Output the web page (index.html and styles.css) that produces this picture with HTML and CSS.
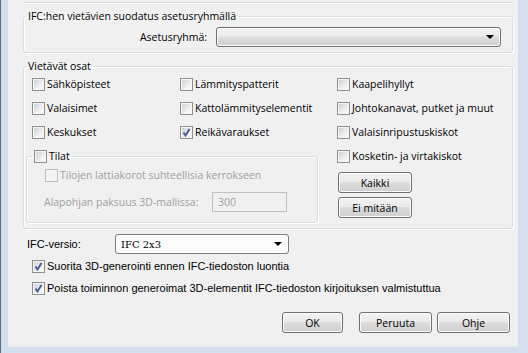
FILE: index.html
```html
<!DOCTYPE html>
<html lang="fi">
<head>
    <meta charset="UTF-8">
    <title>IFC-vienti</title>
    <link rel="stylesheet" href="styles.css">
</head>
<body>
    <div class="window">
        <div class="dialog">
            <div class="prev-group"></div>

            <fieldset class="group group-filter">
                <legend>IFC:hen vietävien suodatus asetusryhmällä</legend>
                <div class="field-row">
                    <span class="field-label">Asetusryhmä:</span>
                    <div class="combo combo-set">
                        <span class="combo-text"></span>
                        <span class="arrow"></span>
                    </div>
                </div>
            </fieldset>

            <fieldset class="group group-parts">
                <legend>Vietävät osat</legend>
                <div class="parts">
                    <div class="parts-left">
                        <div class="check-grid">
                            <label class="check"><span class="box"></span>Sähköpisteet</label>
                            <label class="check"><span class="box"></span>Lämmityspatterit</label>
                            <label class="check"><span class="box"></span>Valaisimet</label>
                            <label class="check"><span class="box"></span>Kattolämmityselementit</label>
                            <label class="check"><span class="box"></span>Keskukset</label>
                            <label class="check"><span class="box checked"></span>Reikävaraukset</label>
                        </div>
                        <fieldset class="subgroup">
                            <legend><label class="check"><span class="box"></span>Tilat</label></legend>
                            <label class="check disabled sub-check"><span class="box"></span>Tilojen lattiakorot suhteellisia kerrokseen</label>
                            <div class="thickness-row disabled">
                                <span class="thickness-label">Alapohjan paksuus 3D-mallissa:</span>
                                <span class="textbox">300</span>
                            </div>
                        </fieldset>
                    </div>
                    <div class="parts-right">
                        <label class="check"><span class="box"></span>Kaapelihyllyt</label>
                        <label class="check"><span class="box"></span>Johtokanavat, putket ja muut</label>
                        <label class="check"><span class="box"></span>Valaisinripustuskiskot</label>
                        <label class="check"><span class="box"></span>Kosketin- ja virtakiskot</label>
                        <button class="btn btn-small btn-first">Kaikki</button>
                        <button class="btn btn-small">Ei mitään</button>
                    </div>
                </div>
            </fieldset>

            <div class="version-row">
                <span class="version-label">IFC-versio:</span>
                <div class="combo combo-version">
                    <span class="combo-text">IFC 2x3</span>
                    <span class="arrow"></span>
                </div>
            </div>
            <label class="check check-old"><span class="box checked"></span>Suorita 3D-generointi ennen IFC-tiedoston luontia</label>
            <label class="check check-old"><span class="box checked"></span>Poista toiminnon generoimat 3D-elementit IFC-tiedoston kirjoituksen valmistuttua</label>

            <div class="dialog-buttons">
                <button class="btn btn-ok">OK</button>
                <button class="btn">Peruuta</button>
                <button class="btn">Ohje</button>
            </div>
        </div>
    </div>
</body>
</html>
```

FILE: styles.css
```css
* {
    box-sizing: border-box;
    margin: 0;
    padding: 0;
}
body {
    margin: 0;
    font-family: 'Open Sans', 'Noto Sans', sans-serif;
    font-size: 10.5px;
    color: #000;
}
.window {
    width: 528px;
    height: 353px;
    background-color: #d4e0ee;
    border-left: 1px solid #5f6d80;
    padding-left: 7px;
    overflow: hidden;
}
.dialog {
    width: 510px;
    height: 347px;
    background-color: #f0f0f0;
    border-bottom: 1px solid #e4e9ef;
}
.prev-group {
    height: 3px;
    margin: 0 5px 0 15px;
    border-bottom: 1px solid #d5dfe5;
    box-shadow: 0 1px 0 #fff;
}

/* group boxes */
.group,
.subgroup {
    border: 1px solid #d5dfe5;
    border-radius: 3px;
    padding: 0;
    min-width: 0;
    box-shadow: inset 1px 1px 0 #fff, 1px 1px 0 #fff;
}
.group {
    margin: 6px 5px 0 15px;
}
.group legend {
    margin-left: 2px;
    padding: 0 2px;
    line-height: 15px;
}
.field-row {
    display: flex;
    justify-content: flex-end;
    align-items: center;
    gap: 9px;
    padding: 3px 11px 5px 0;
}

/* combo boxes */
.combo {
    display: flex;
    align-items: center;
    height: 20px;
    border: 1px solid #707070;
    border-radius: 3px;
}
.combo-set {
    width: 285px;
    background: linear-gradient(#f2f2f2 0%, #ebebeb 45%, #dddddd 50%, #cfcfcf 100%);
    box-shadow: inset 0 0 0 1px #fcfcfc;
}
.combo-version {
    width: 174px;
    background-color: #fbfbfb;
    border-color: #7a7a7a;
    box-shadow: inset 0 0 0 1px #fff;
}
.combo-text {
    flex: 1;
    padding-left: 5px;
    font-family: 'DejaVu Serif', serif;
    font-size: 10px;
}
.arrow {
    width: 0;
    height: 0;
    margin-right: 6px;
    border-left: 4px solid transparent;
    border-right: 4px solid transparent;
    border-top: 4px solid #000;
}

/* parts */
.parts {
    display: flex;
    padding-bottom: 5px;
}
.parts-left {
    width: 313px;
}
.check-grid {
    display: grid;
    grid-template-columns: 148px 1fr;
    grid-auto-rows: 20px;
    row-gap: 4px;
    padding-left: 8px;
}
.parts-right {
    display: flex;
    flex-direction: column;
    gap: 4px;
}
.parts-right .check {
    height: 20px;
}
.check {
    display: flex;
    align-items: center;
    white-space: nowrap;
}
.box {
    width: 13px;
    height: 13px;
    margin-right: 2px;
    flex-shrink: 0;
    border: 1px solid #8e8f8f;
    background: linear-gradient(135deg, #cbcfd5 0%, #f4f4f4 70%, #fbfbfb 100%);
    box-shadow: inset 0 0 0 1px #f6f6f6;
}
.box.checked {
    background:
        url("data:image/svg+xml,%3Csvg xmlns='http://www.w3.org/2000/svg' width='11' height='11'%3E%3Cpath d='M2.5 5.5 L4.5 8.5 L8.5 2' fill='none' stroke='%23495d9a' stroke-width='2'/%3E%3C/svg%3E") center no-repeat,
        linear-gradient(135deg, #cbcfd5 0%, #f4f4f4 70%, #fbfbfb 100%);
}
.disabled {
    color: #a0a0a0;
}
.disabled .box {
    border-color: #bcbcbc;
    background: #f4f4f4;
    box-shadow: none;
}

/* Tilat */
.subgroup {
    margin: 4px 0 0 2px;
    width: 292px;
    padding-bottom: 10px;
}
.subgroup legend {
    margin-left: 5px;
    padding-right: 2px;
    height: 20px;
    display: flex;
    align-items: center;
}
.sub-check {
    height: 18px;
    padding-left: 18px;
}
.thickness-row {
    display: flex;
    align-items: center;
    margin-top: 8px;
    padding-left: 17px;
}
.thickness-label {
    width: 168px;
}
.textbox {
    width: 75px;
    height: 20px;
    padding-left: 5px;
    border: 1px solid #c0c0c0;
    background-color: #f0f0f0;
    line-height: 18px;
}

/* buttons */
.btn {
    font-family: inherit;
    font-size: 10.5px;
    color: #000;
    height: 21px;
    border: 1px solid #707070;
    border-radius: 3px;
    background: linear-gradient(#f2f2f2 0%, #ebebeb 45%, #dddddd 50%, #cfcfcf 100%);
    box-shadow: inset 0 0 0 1px #fcfcfc;
}
.btn-small {
    width: 74px;
    margin-left: 1px;
}
.btn-first {
    margin-top: 2px;
}
.dialog-buttons .btn {
    width: 73px;
}
.dialog-buttons .btn-ok {
    width: 61px;
    margin-right: 11px;
}

/* bottom */
.version-row {
    display: flex;
    align-items: center;
    margin-top: 5px;
    padding-left: 19px;
    font-family: 'Liberation Sans', sans-serif;
    font-size: 11px;
}
.version-label {
    width: 88px;
}
.check-old {
    height: 20px;
    margin-top: 2px;
    padding-left: 24px;
    font-family: 'Liberation Sans', sans-serif;
    font-size: 11px;
}
.dialog-buttons {
    display: flex;
    justify-content: flex-end;
    gap: 5px;
    padding: 14px 8px 0 0;
}
```
